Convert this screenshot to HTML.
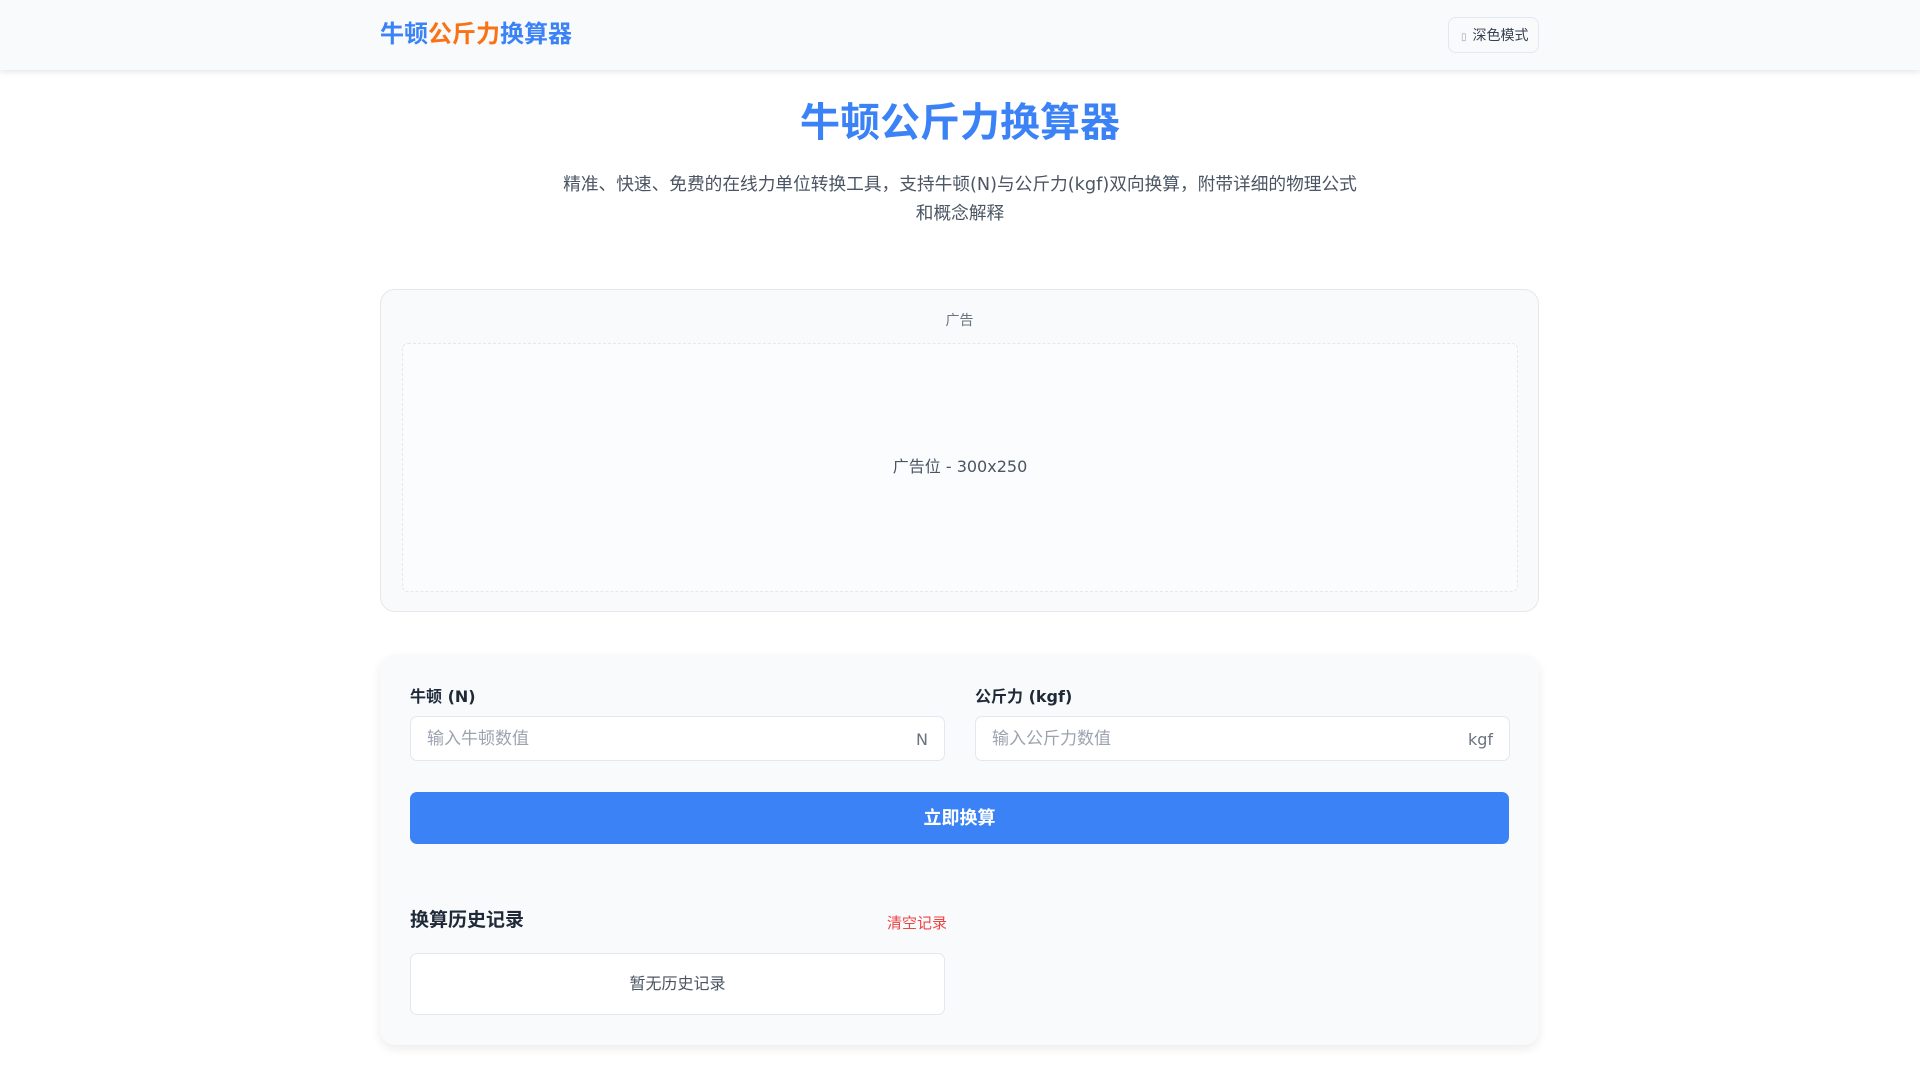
<!DOCTYPE html>
<html lang="zh"><head><meta charset="utf-8"><style>
*{box-sizing:border-box;margin:0;padding:0}
body{width:1920px;height:1080px;overflow:hidden;background:#fff;font-family:"DejaVu Sans","Noto Sans CJK SC",sans-serif;color:#1f2937}
.hdr{height:70px;background:#f8fafc;box-shadow:0 2px 6px rgba(0,0,0,.1);position:relative}
.logo{position:absolute;left:380px;top:16px;font-size:24px;font-weight:bold;color:#3b82f6;line-height:36px}
.logo span{color:#f97316}
.dm{position:absolute;left:1448px;top:17px;width:91px;height:36px;border:1px solid #e2e8f0;border-radius:8px;background:#f8fafc;font-size:14px;color:#374151;line-height:36px;padding-left:12px;white-space:nowrap}
.dm i{font-style:normal;color:#9ca3af;font-size:10px;margin-right:6px}
h1{position:absolute;left:0;width:1920px;top:95px;text-align:center;font-size:40px;color:#3b82f6;line-height:56px}
.sub{position:absolute;left:510px;width:900px;top:171px;text-align:center;font-size:17.7px;line-height:29px;color:#4b5563;white-space:nowrap}
.ad{position:absolute;left:380px;top:289px;width:1159px;height:323px;background:#f8fafc;border:1px solid #e5e7eb;border-radius:15px}
.ad .l{position:absolute;top:20px;width:100%;text-align:center;font-size:14px;color:#6b7280}
.ad .in{position:absolute;left:21px;top:53px;width:1116px;height:249px;border:1px dashed #e5e7eb;border-radius:6px;background:#fbfcfe;text-align:center;line-height:245px;font-size:16px;color:#4b5563}
.cv{position:absolute;left:380px;top:655px;width:1159px;height:390px;background:#f8fafc;border-radius:15px;box-shadow:0 4px 10px rgba(0,0,0,.08)}
.lab{position:absolute;top:28px;font-size:16px;font-weight:bold;color:#1f2937}
.inp{position:absolute;top:61px;width:535px;height:45px;background:#fff;border:1px solid #e2e8f0;border-radius:7px;font-size:17px;color:#9ca3af;line-height:45px;padding:0 16px}
.inp b{position:absolute;right:16px;top:0;font-weight:normal;color:#6b7280;font-size:16px}
.btn{position:absolute;left:30px;top:137px;width:1099px;height:52px;background:#3b82f6;border-radius:7px;color:#fff;font-weight:bold;font-size:18px;text-align:center;line-height:54px}
.ht{position:absolute;left:30px;top:250px;font-size:19px;font-weight:bold;color:#1f2937}
.clr{position:absolute;left:507px;top:257px;font-size:15px;color:#ef4444}
.hb{position:absolute;left:30px;top:298px;width:535px;height:62px;background:#fff;border:1px solid #e2e8f0;border-radius:7px;text-align:center;line-height:60px;font-size:16px;color:#4b5563}
</style></head><body>
<div class="hdr"><div class="logo">牛顿<span>公斤力</span>换算器</div><div class="dm"><i>▯</i>深色模式</div></div>
<h1>牛顿公斤力换算器</h1>
<div class="sub">精准、快速、免费的在线力单位转换工具，支持牛顿(N)与公斤力(kgf)双向换算，附带详细的物理公式<br>和概念解释</div>
<div class="ad"><div class="l">广告</div><div class="in">广告位 - 300x250</div></div>
<div class="cv">
<div class="lab" style="left:30px">牛顿 (N)</div>
<div class="lab" style="left:595px">公斤力 (kgf)</div>
<div class="inp" style="left:30px">输入牛顿数值<b>N</b></div>
<div class="inp" style="left:595px">输入公斤力数值<b>kgf</b></div>
<div class="btn">立即换算</div>
<div class="ht">换算历史记录</div>
<div class="clr">清空记录</div>
<div class="hb">暂无历史记录</div>
</div>
</body></html>
